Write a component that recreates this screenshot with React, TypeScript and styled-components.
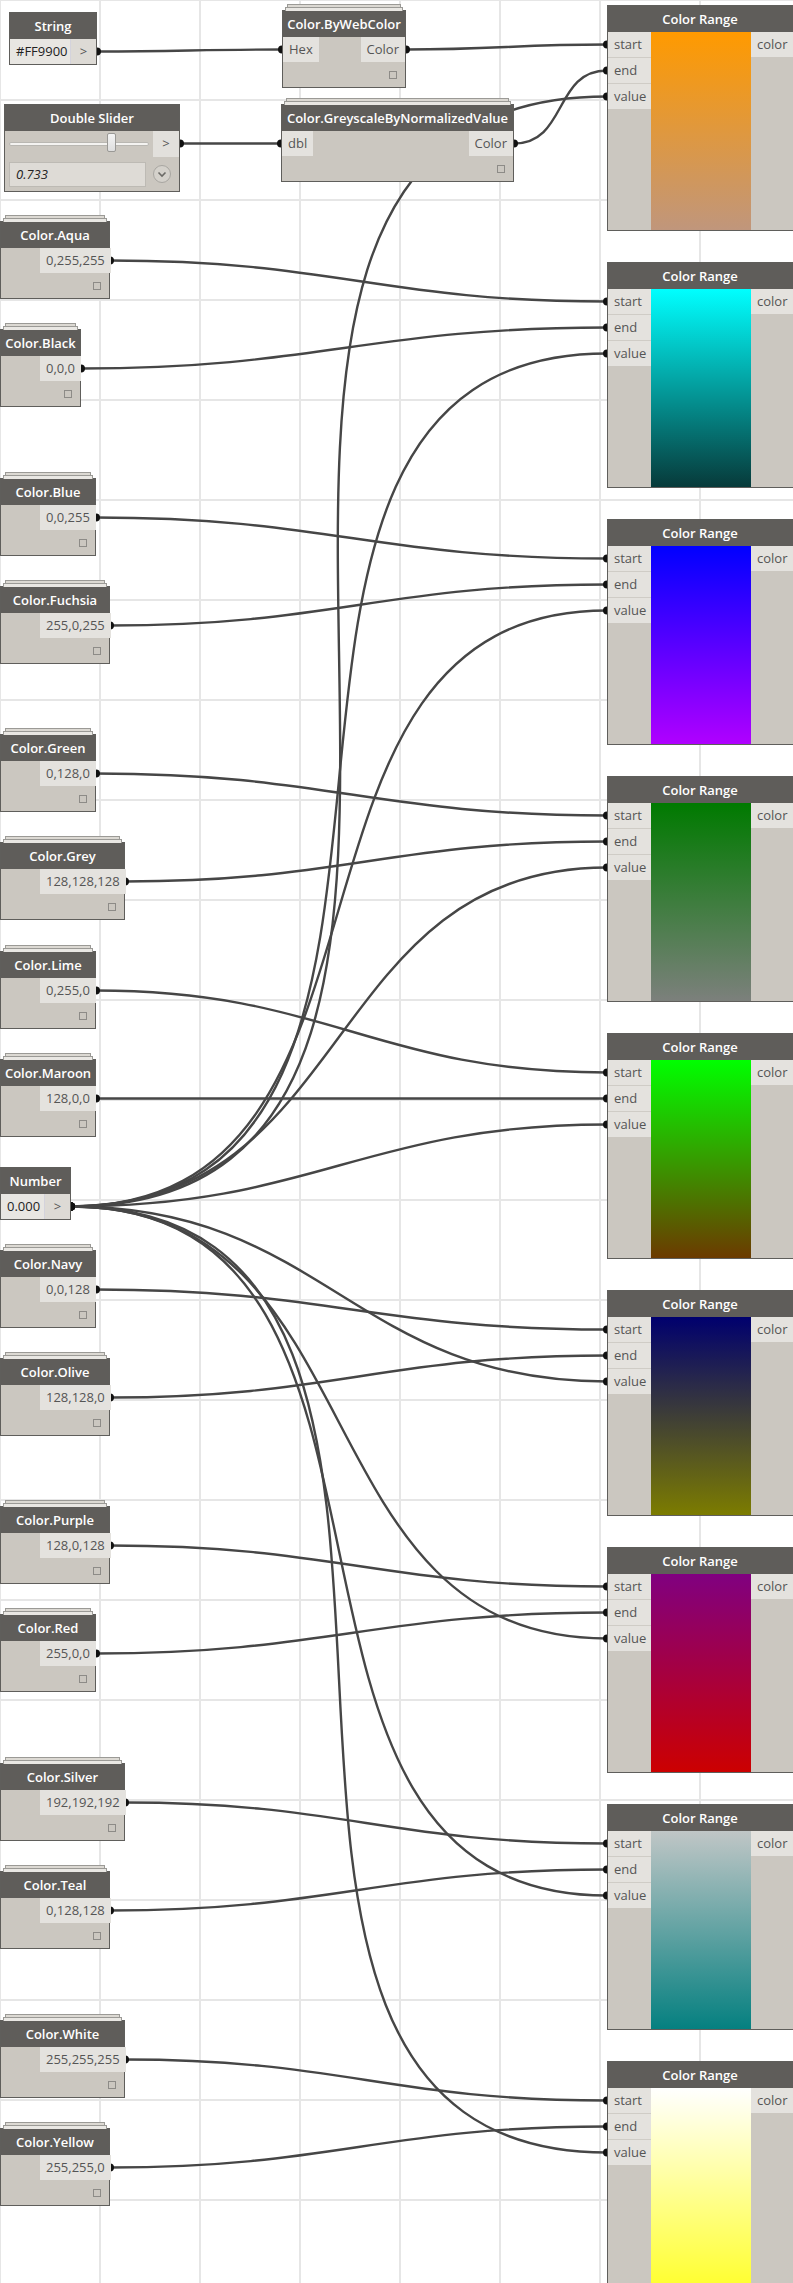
import React from "react";
import styled, { createGlobalStyle, css } from "styled-components";

// ---- layout data ----------------------------------------------------------

const HEADER = 26;
const ROW = 25;
const RANGE_X = 607;
const rangeTop = (i: number) => 5 + 257 * i;

const colorNodes = [
  { name: "Color.Aqua", value: "0,255,255", top: 221, width: 110 },
  { name: "Color.Black", value: "0,0,0", top: 329, width: 81 },
  { name: "Color.Blue", value: "0,0,255", top: 478, width: 96 },
  { name: "Color.Fuchsia", value: "255,0,255", top: 586, width: 110 },
  { name: "Color.Green", value: "0,128,0", top: 734, width: 96 },
  { name: "Color.Grey", value: "128,128,128", top: 842, width: 125 },
  { name: "Color.Lime", value: "0,255,0", top: 951, width: 96 },
  { name: "Color.Maroon", value: "128,0,0", top: 1059, width: 96 },
  { name: "Color.Navy", value: "0,0,128", top: 1250, width: 96 },
  { name: "Color.Olive", value: "128,128,0", top: 1358, width: 110 },
  { name: "Color.Purple", value: "128,0,128", top: 1506, width: 110 },
  { name: "Color.Red", value: "255,0,0", top: 1614, width: 96 },
  { name: "Color.Silver", value: "192,192,192", top: 1763, width: 125 },
  { name: "Color.Teal", value: "0,128,128", top: 1871, width: 110 },
  { name: "Color.White", value: "255,255,255", top: 2020, width: 125 },
  { name: "Color.Yellow", value: "255,255,0", top: 2128, width: 110 },
];

const ranges = [
  ["#ff9a00", "#c0967c"],
  ["#00ffff", "#073a3a"],
  ["#0000ff", "#b000ff"],
  ["#007a00", "#7c807c"],
  ["#00ff00", "#6c3a00"],
  ["#00006e", "#7c7c00"],
  ["#800080", "#cc0000"],
  ["#c0c6c6", "#058080"],
  ["#ffffff", "#ffff30"],
];

const NUMBER = { x: 0, y: 1167, w: 71 };

// port centre for row n (0 based) of a node whose top is y
const portY = (y: number, n = 0) => y + 1 + HEADER + ROW * n + n + 12.5;

type Wire = [number, number, number, number];

const wires: Wire[] = [
  [97, portY(12), 282, portY(10)],
  [406, portY(10), RANGE_X, portY(rangeTop(0))],
  [180, portY(104), 281, portY(104)],
  [514, portY(104), RANGE_X, portY(rangeTop(0), 1)],
  ...ranges.map((_, i): Wire => [NUMBER.w, portY(NUMBER.y), RANGE_X, portY(rangeTop(i), 2)]),
  ...colorNodes.map((n, j): Wire => [
    n.width,
    portY(n.top),
    RANGE_X,
    portY(rangeTop(Math.floor(j / 2) + 1), j % 2),
  ]),
];

// bezier handles grow with the length of the connector
function wirePath([x0, y0, x1, y1]: Wire) {
  const k = Math.hypot(x1 - x0, y1 - y0) * 0.45;
  return `M${x0} ${y0} C${x0 + k} ${y0} ${x1 - k} ${y1} ${x1} ${y1}`;
}

// ---- styles ---------------------------------------------------------------

const GlobalStyle = createGlobalStyle`
  html, body {
    margin: 0;
    padding: 0;
    overflow: hidden;
    background: #fff;
  }
  body {
    font-family: "Open Sans", "DejaVu Sans", sans-serif;
  }
`;

const Canvas = styled.div`
  position: relative;
  width: 793px;
  height: 2283px;
  overflow: hidden;
  background-color: #fff;
  background-image: linear-gradient(to right, #e6e6e6 2px, transparent 2px),
    linear-gradient(to bottom, #e6e6e6 2px, transparent 2px);
  background-size: 100px 100px;
  background-position: -1px -1px;
`;

const WireLayer = styled.svg`
  position: absolute;
  left: 0;
  top: 0;
`;

const Node = styled.div<{ $x: number; $y: number; $w: number; $stacked?: boolean }>`
  position: absolute;
  left: ${(p) => p.$x}px;
  top: ${(p) => p.$y}px;
  width: ${(p) => p.$w}px;
  box-sizing: border-box;
  background: #cbc7c0;
  border: 1px solid #5f5e5b;
  font-size: 13px;
  color: #555;

  ${(p) =>
    p.$stacked &&
    css`
      &::before,
      &::after {
        content: "";
        position: absolute;
        border: 1px solid #9b9a96;
        border-bottom: none;
      }
      &::before {
        top: -7px;
        left: 4px;
        right: 4px;
        height: 6px;
        background: #dcd9d3;
      }
      &::after {
        top: -4px;
        left: 2px;
        right: 2px;
        height: 3px;
        background: #e9e7e3;
      }
    `}
`;

const Header = styled.div`
  height: ${HEADER}px;
  line-height: ${HEADER}px;
  background: #5f5d5a;
  color: #fff;
  font-weight: 600;
  text-align: center;
  white-space: nowrap;
  overflow: hidden;
`;

const Row = styled.div`
  display: flex;
  justify-content: space-between;
  height: ${ROW}px;
`;

const PortLabel = styled.div<{ $grow?: boolean }>`
  ${(p) => p.$grow && "flex: 1; text-align: right;"}
  background: #e4e2de;
  padding: 0 6px;
  line-height: ${ROW}px;
  white-space: nowrap;
`;

const Spacer = styled.div<{ $w: number }>`
  width: ${(p) => p.$w}px;
  flex: none;
`;

const Footer = styled.div`
  display: flex;
  justify-content: flex-end;
  align-items: center;
  height: ${ROW}px;
  padding-right: 8px;
`;

const Square = styled.div`
  width: 6px;
  height: 6px;
  border: 1px solid #8d8b87;
`;

const Field = styled.div<{ $w?: number }>`
  ${(p) => (p.$w ? `width: ${p.$w}px;` : "flex: 1;")}
  box-sizing: border-box;
  background: #e8e6e2;
  color: #222;
  padding-left: 6px;
  line-height: ${ROW}px;
  border-right: 1px solid #d4d3dc;
`;

const Arrow = styled.div`
  flex: 1;
  background: #dddad5;
  text-align: center;
  line-height: ${ROW}px;
  color: #555;
`;

const ArrowFixed = styled(Arrow)`
  flex: none;
  width: 26px;
  background: #e2e0dc;
`;

const Track = styled.div`
  flex: 1;
  position: relative;
`;

const TrackLine = styled.div`
  margin: 11px 4px 0 4px;
  height: 2px;
  background: #f4f3f1;
  border: 1px solid #b9b7b2;
  border-radius: 2px;
`;

const Thumb = styled.div<{ $at: number }>`
  position: absolute;
  left: ${(p) => p.$at}px;
  top: 2px;
  width: 9px;
  height: 19px;
  box-sizing: border-box;
  background: linear-gradient(#f4f4f4, #dedede);
  border: 1px solid #9a9996;
  border-radius: 2px;
`;

const ValueRow = styled.div`
  display: flex;
  align-items: center;
  gap: 6px;
  height: 34px;
  padding-left: 4px;
`;

const ValueBox = styled.div`
  width: 137px;
  height: 25px;
  box-sizing: border-box;
  background: #dedbd6;
  border: 1px solid #bdbab4;
  color: #222;
  font-style: italic;
  padding-left: 6px;
  line-height: 23px;
`;

const RangeBody = styled.div`
  display: flex;
  height: 198px;
`;

const PortColumn = styled.div<{ $w?: number }>`
  ${(p) => (p.$w ? `width: ${p.$w}px;` : "flex: 1;")}
  display: flex;
  flex-direction: column;
`;

const RangePort = styled.div<{ $last?: boolean }>`
  height: ${ROW}px;
  line-height: ${ROW}px;
  padding-left: 6px;
  background: #e4e2de;
  border-bottom: ${(p) => (p.$last ? "none" : "1px solid #cfccc6")};
`;

const Preview = styled.div<{ $from: string; $to: string }>`
  width: 100px;
  background: linear-gradient(${(p) => p.$from}, ${(p) => p.$to});
`;

const RangeHeader = styled(Header)`
  padding-right: 6px;
`;

const SliderRow = styled(Row)`
  height: 26px;
`;

// ---- parts ---------------------------------------------------------------

function ColorNode({ name, value, top, width }: (typeof colorNodes)[number]) {
  return (
    <Node $x={0} $y={top} $w={width} $stacked>
      <Header>{name}</Header>
      <Row>
        <Spacer $w={39} />
        <PortLabel $grow>{value}</PortLabel>
      </Row>
      <Footer>
        <Square />
      </Footer>
    </Node>
  );
}

function ColorRange({ index, from, to }: { index: number; from: string; to: string }) {
  return (
    <Node $x={RANGE_X} $y={rangeTop(index)} $w={192}>
      <RangeHeader>Color Range</RangeHeader>
      <RangeBody>
        <PortColumn $w={43}>
          <RangePort>start</RangePort>
          <RangePort>end</RangePort>
          <RangePort $last>value</RangePort>
        </PortColumn>
        <Preview $from={from} $to={to} />
        <PortColumn>
          <RangePort $last>color</RangePort>
        </PortColumn>
      </RangeBody>
    </Node>
  );
}

function Chevron() {
  return (
    <svg width="20" height="20" viewBox="0 0 20 20">
      <circle cx="10" cy="10" r="8.5" fill="#d4d1cb" stroke="#a8a6a1" strokeWidth="1" />
      <path d="M6.5 8.5 L10 12 L13.5 8.5" fill="none" stroke="#6b6a66" strokeWidth="1.6" />
    </svg>
  );
}

export default function App() {
  return (
    <Canvas>
      <GlobalStyle />
      <WireLayer width={793} height={2283}>
        {wires.map((w, i) => (
          <path key={i} d={wirePath(w)} fill="none" stroke="#464646" strokeWidth={2.4} />
        ))}
        {wires.map((w, i) => (
          <g key={"d" + i} fill="#111">
            <circle cx={w[0]} cy={w[1]} r={4} />
            <circle cx={w[2]} cy={w[3]} r={4} />
          </g>
        ))}
      </WireLayer>

      <Node $x={9} $y={12} $w={88}>
        <Header>String</Header>
        <Row>
          <Field $w={61}>#FF9900</Field>
          <Arrow>&gt;</Arrow>
        </Row>
      </Node>

      <Node $x={282} $y={10} $w={124} $stacked>
        <Header>Color.ByWebColor</Header>
        <Row>
          <PortLabel>Hex</PortLabel>
          <PortLabel>Color</PortLabel>
        </Row>
        <Footer>
          <Square />
        </Footer>
      </Node>

      <Node $x={4} $y={104} $w={176}>
        <Header>Double Slider</Header>
        <SliderRow>
          <Track>
            <TrackLine />
            <Thumb $at={102} />
          </Track>
          <ArrowFixed>&gt;</ArrowFixed>
        </SliderRow>
        <ValueRow>
          <ValueBox>0.733</ValueBox>
          <Chevron />
        </ValueRow>
      </Node>

      <Node $x={281} $y={104} $w={233} $stacked>
        <Header>Color.GreyscaleByNormalizedValue</Header>
        <Row>
          <PortLabel>dbl</PortLabel>
          <PortLabel>Color</PortLabel>
        </Row>
        <Footer>
          <Square />
        </Footer>
      </Node>

      {colorNodes.map((n) => (
        <ColorNode key={n.name} {...n} />
      ))}

      <Node $x={NUMBER.x} $y={NUMBER.y} $w={NUMBER.w}>
        <Header>Number</Header>
        <Row>
          <Field $w={44}>0.000</Field>
          <Arrow>&gt;</Arrow>
        </Row>
      </Node>

      {ranges.map(([from, to], i) => (
        <ColorRange key={i} index={i} from={from} to={to} />
      ))}
    </Canvas>
  );
}
